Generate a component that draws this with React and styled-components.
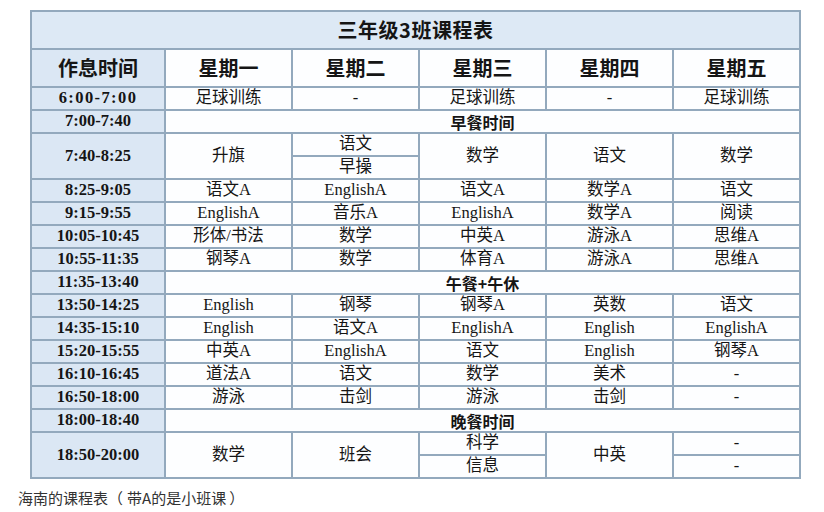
import React from "react";
import styled, { createGlobalStyle } from "styled-components";

const GlobalStyle = createGlobalStyle`
  html, body {
    margin: 0;
    padding: 0;
    background: #ffffff;
  }
  body {
    font-family: "Liberation Serif", "Noto Sans CJK SC", serif;
    color: #151515;
  }
`;

const Page = styled.div`
  width: 824px;
  height: 512px;
  padding: 10px 0 0 30px;
  box-sizing: border-box;
  display: flex;
  flex-direction: column;
`;

const Table = styled.table`
  width: 771px;
  table-layout: fixed;
  border-collapse: collapse;
  border: 2px solid #93a9bd;
`;

const Cell = styled.td`
  border: 2px solid #93a9bd;
  padding: 0;
  text-align: center;
  vertical-align: middle;
  font-size: 16.5px;
  line-height: 1;
  background: #fdfeff;
  white-space: nowrap;
  overflow: hidden;
`;

const TitleCell = styled(Cell)`
  background: #dde9f5;
  font-family: "Noto Sans CJK SC", "Liberation Sans", sans-serif;
  font-weight: 700;
  font-size: 20px;
  letter-spacing: 0.5px;
`;

const HeadCell = styled(Cell)`
  font-family: "Noto Sans CJK SC", sans-serif;
  font-weight: 700;
  font-size: 20px;
  background: ${(p) => (p.$time ? "#dbe7f4" : "#fdfeff")};
`;

const TimeCell = styled(Cell)`
  background: #dbe7f4;
  font-weight: 700;
  font-size: 16.5px;
  letter-spacing: ${(p) => (p.$wide ? "1.4px" : "0")};
`;

const MealCell = styled(Cell)`
  font-family: "Noto Sans CJK SC", sans-serif;
  font-weight: 700;
  font-size: 16px;
`;

const Row = styled.tr`
  height: ${(p) => p.$h || 23}px;
`;

const Caption = styled.div`
  margin-top: 11px;
  margin-left: -12px;
  font-family: "Noto Sans CJK SC", "Noto Sans", sans-serif;
  font-size: 15px;
  line-height: 1;
  color: #333333;
`;

const Paren = styled.span`
  display: inline-block;
  margin: ${(p) => (p.$open ? "0 4px 0 0" : "0 0 0 3px")};
`;

const days = ["星期一", "星期二", "星期三", "星期四", "星期五"];

const rowsA = [
  ["8:25-9:05", ["语文A", "EnglishA", "语文A", "数学A", "语文"]],
  ["9:15-9:55", ["EnglishA", "音乐A", "EnglishA", "数学A", "阅读"]],
  ["10:05-10:45", ["形体/书法", "数学", "中英A", "游泳A", "思维A"]],
  ["10:55-11:35", ["钢琴A", "数学", "体育A", "游泳A", "思维A"]],
];

const rowsB = [
  ["13:50-14:25", ["English", "钢琴", "钢琴A", "英数", "语文"]],
  ["14:35-15:10", ["English", "语文A", "EnglishA", "English", "EnglishA"]],
  ["15:20-15:55", ["中英A", "EnglishA", "语文", "English", "钢琴A"]],
  ["16:10-16:45", ["道法A", "语文", "数学", "美术", "-"]],
  ["16:50-18:00", ["游泳", "击剑", "游泳", "击剑", "-"]],
];

function Lessons({ rows }) {
  return rows.map(([time, items]) => (
    <Row key={time}>
      <TimeCell>{time}</TimeCell>
      {items.map((t, i) => (
        <Cell key={i}>{t}</Cell>
      ))}
    </Row>
  ));
}

function Meal({ time, label }) {
  return (
    <Row>
      <TimeCell>{time}</TimeCell>
      <MealCell colSpan={5}>{label}</MealCell>
    </Row>
  );
}

export default function App() {
  return (
    <>
      <GlobalStyle />
      <Page>
        <Table>
          <colgroup>
            <col style={{ width: 134 }} />
            {days.map((d) => (
              <col key={d} />
            ))}
          </colgroup>
          <tbody>
            <Row $h={38}>
              <TitleCell colSpan={6}>三年级3班课程表</TitleCell>
            </Row>
            <Row $h={38}>
              <HeadCell $time>作息时间</HeadCell>
              {days.map((d) => (
                <HeadCell key={d}>{d}</HeadCell>
              ))}
            </Row>
            <Row>
              <TimeCell $wide>6:00-7:00</TimeCell>
              <Cell>足球训练</Cell>
              <Cell>-</Cell>
              <Cell>足球训练</Cell>
              <Cell>-</Cell>
              <Cell>足球训练</Cell>
            </Row>
            <Meal time="7:00-7:40" label="早餐时间" />
            <Row>
              <TimeCell rowSpan={2}>7:40-8:25</TimeCell>
              <Cell rowSpan={2}>升旗</Cell>
              <Cell>语文</Cell>
              <Cell rowSpan={2}>数学</Cell>
              <Cell rowSpan={2}>语文</Cell>
              <Cell rowSpan={2}>数学</Cell>
            </Row>
            <Row>
              <Cell>早操</Cell>
            </Row>
            <Lessons rows={rowsA} />
            <Meal time="11:35-13:40" label="午餐+午休" />
            <Lessons rows={rowsB} />
            <Meal time="18:00-18:40" label="晚餐时间" />
            <Row>
              <TimeCell rowSpan={2}>18:50-20:00</TimeCell>
              <Cell rowSpan={2}>数学</Cell>
              <Cell rowSpan={2}>班会</Cell>
              <Cell>科学</Cell>
              <Cell rowSpan={2}>中英</Cell>
              <Cell>-</Cell>
            </Row>
            <Row>
              <Cell>信息</Cell>
              <Cell>-</Cell>
            </Row>
          </tbody>
        </Table>
        <Caption>
          海南的课程表<Paren $open>（</Paren>带A的是小班课<Paren>）</Paren>
        </Caption>
      </Page>
    </>
  );
}
